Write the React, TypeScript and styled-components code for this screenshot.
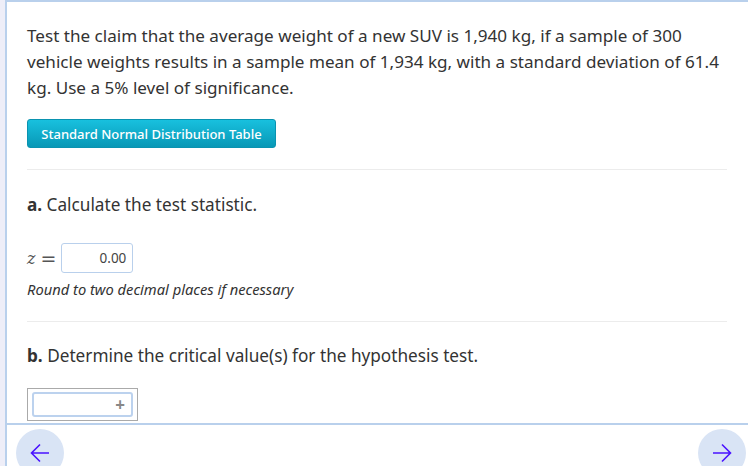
import React from 'react';
import styled, { createGlobalStyle } from 'styled-components';

const GlobalStyle = createGlobalStyle`
  html, body {
    margin: 0;
    padding: 0;
    background: #ffffff;
  }
  body {
    font-family: 'Noto Sans', 'Open Sans', sans-serif;
    color: #333;
  }
`;

const Shell = styled.div`
  display: flex;
  width: 748px;
  height: 466px;
  overflow: hidden;
  background: #eeeef8;
`;

const Frame = styled.div`
  flex: 1;
  margin-left: 5px;
  border-left: 2px solid #b9d0ec;
  border-top: 2px solid #b9d0ec;
  background: #fff;
  display: flex;
  flex-direction: column;
`;

const Content = styled.div`
  padding: 21px 21px 0 20px;
  display: flex;
  flex-direction: column;
`;

const Prompt = styled.p`
  margin: 0;
  font-size: 17.1px;
  line-height: 26px;
  color: #333;
`;

const TableButton = styled.button`
  align-self: flex-start;
  margin-top: 18px;
  height: 29px;
  width: 249px;
  padding: 0 8px;
  border: 1px solid #0a93b0;
  border-radius: 3px;
  background: linear-gradient(#18c0de, #0898b6);
  color: #fff;
  font-family: 'Noto Sans', sans-serif;
  font-size: 13px;
  font-weight: 500;
  cursor: pointer;
`;

const Divider = styled.hr<{ $gap: number }>`
  border: 0;
  border-top: 1px solid #ececec;
  margin: ${p => p.$gap}px 0 0;
`;

const PartTitle = styled.div<{ $top: number }>`
  margin-top: ${p => p.$top}px;
  font-size: 17.2px;
  line-height: 24px;
  color: #333;
  b {
    font-weight: 700;
  }
`;

const AnswerRow = styled.div`
  margin-top: 26px;
  display: flex;
  align-items: center;
  gap: 5px;
`;

const MathVar = styled.span`
  font-family: 'DejaVu Serif', serif;
  font-style: italic;
  font-size: 16px;
  color: #555;
`;

const MathEq = styled.span`
  font-family: 'DejaVu Sans', sans-serif;
  font-size: 19px;
  color: #555;
`;

const NumberBox = styled.div`
  width: 72px;
  height: 30px;
  border: 1px solid #b9d0ec;
  border-radius: 3px;
  display: flex;
  align-items: center;
  justify-content: flex-end;
  padding-right: 6px;
  box-sizing: border-box;
  font-size: 13.5px;
  color: #444;
`;

const Hint = styled.div`
  margin-top: 6px;
  font-size: 14.7px;
  font-style: italic;
  line-height: 20px;
  color: #333;
`;

const OuterBox = styled.div`
  align-self: flex-start;
  margin-top: 20px;
  width: 111px;
  height: 33px;
  box-sizing: border-box;
  border: 1px solid #aaa;
  padding: 3px 4px;
`;

const PlusInput = styled.div`
  height: 25px;
  box-sizing: border-box;
  border: 2px solid #bcd2ee;
  border-radius: 3px;
  display: flex;
  align-items: center;
  justify-content: flex-end;
  padding-right: 6px;
  color: #888;
  font-size: 17px;
  font-weight: 700;
  line-height: 1;
`;

const Footer = styled.div`
  margin-top: 2px;
  border-top: 2px solid #b9d0ec;
  display: flex;
  justify-content: space-between;
  padding: 4px 2px 0 9px;
`;

const NavButton = styled.button`
  width: 48px;
  height: 48px;
  flex-shrink: 0;
  border-radius: 50%;
  border: 0;
  background: #d9e4f5;
  display: flex;
  align-items: center;
  justify-content: center;
  padding: 0;
  cursor: pointer;
`;

const Arrow = ({ dir }: { dir: 'left' | 'right' }) => (
  <svg width="20" height="20" viewBox="0 0 20 20" fill="none" stroke="#4a12ff" strokeWidth="1.6">
    {dir === 'left' ? (
      <path d="M19 10H1.5M10 1.5L1.5 10l8.5 8.5" />
    ) : (
      <path d="M1 10h17.5M10 1.5l8.5 8.5-8.5 8.5" />
    )}
  </svg>
);

export default function App() {
  return (
    <>
      <GlobalStyle />
      <Shell>
        <Frame>
          <Content>
            <Prompt>
              Test the claim that the average weight of a new SUV is 1,940 kg, if a sample of 300
              vehicle weights results in a sample mean of 1,934 kg, with a standard deviation of 61.4
              kg. Use a 5% level of significance.
            </Prompt>
            <TableButton>Standard Normal Distribution Table</TableButton>
            <Divider $gap={21} />
            <PartTitle $top={23}>
              <b>a.</b> Calculate the test statistic.
            </PartTitle>
            <AnswerRow>
              <MathVar>z</MathVar>
              <MathEq>=</MathEq>
              <NumberBox>0.00</NumberBox>
            </AnswerRow>
            <Hint>Round to two decimal places if necessary</Hint>
            <Divider $gap={22} />
            <PartTitle $top={22}>
              <b>b.</b> Determine the critical value(s) for the hypothesis test.
            </PartTitle>
            <OuterBox>
              <PlusInput>+</PlusInput>
            </OuterBox>
          </Content>
          <Footer>
            <NavButton aria-label="Previous">
              <Arrow dir="left" />
            </NavButton>
            <NavButton aria-label="Next">
              <Arrow dir="right" />
            </NavButton>
          </Footer>
        </Frame>
      </Shell>
    </>
  );
}
